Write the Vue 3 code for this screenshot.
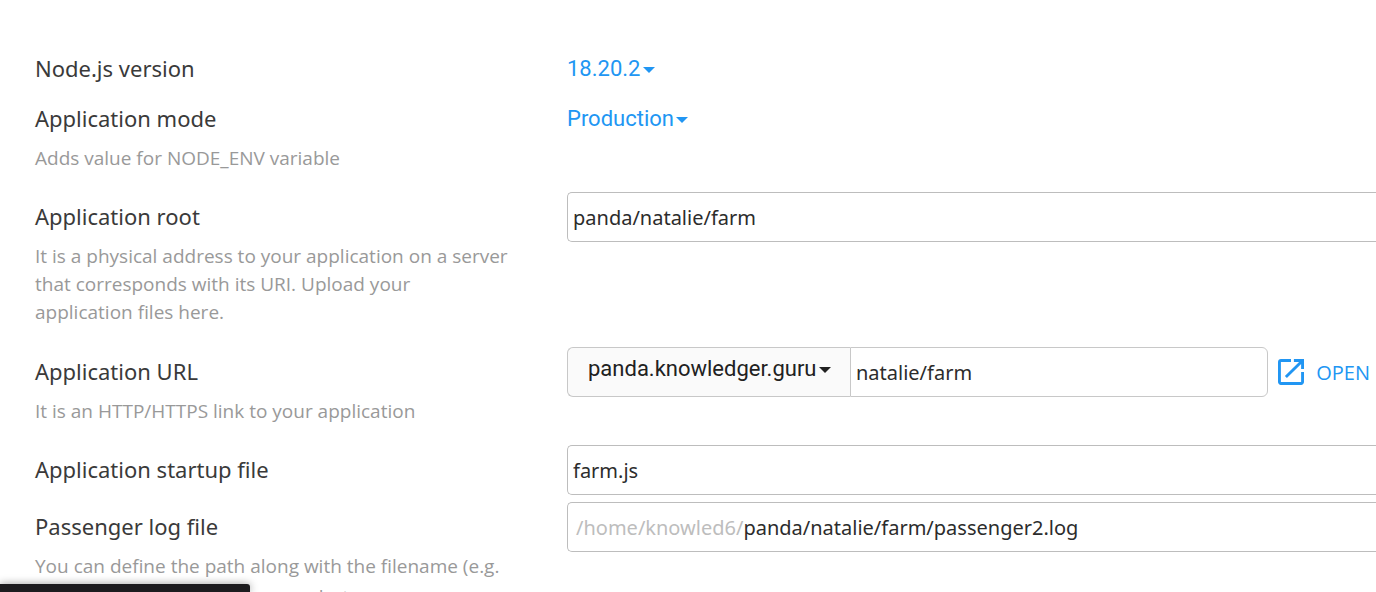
<script setup>
import { ref } from 'vue'

const version = ref('18.20.2')
const mode = ref('Production')
const root = ref('panda/natalie/farm')
const domain = ref('panda.knowledger.guru')
const uri = ref('natalie/farm')
const startup = ref('farm.js')
const logFile = ref('panda/natalie/farm/passenger2.log')
</script>

<template>
  <main class="page">
    <form class="form" @submit.prevent>
      <div class="row">
        <div class="info"><label class="title" for="version">Node.js version</label></div>
        <div class="field">
          <span class="picker">
            <select id="version" v-model="version"><option>18.20.2</option></select>
            <svg class="caret" viewBox="0 0 12 6" aria-hidden="true"><path d="M0 0h12L6 6z" /></svg>
          </span>
        </div>
      </div>

      <div class="row described">
        <div class="info">
          <label class="title" for="mode">Application mode</label>
          <p class="hint">Adds value for NODE_ENV variable</p>
        </div>
        <div class="field">
          <span class="picker">
            <select id="mode" v-model="mode"><option>Production</option></select>
            <svg class="caret" viewBox="0 0 12 6" aria-hidden="true"><path d="M0 0h12L6 6z" /></svg>
          </span>
        </div>
      </div>

      <div class="row described-long">
        <div class="info">
          <label class="title" for="root">Application root</label>
          <p class="hint">It is a physical address to your application on a server that corresponds with its URI. Upload your application files here.</p>
        </div>
        <div class="field">
          <input id="root" v-model="root" class="box wide" type="text" />
        </div>
      </div>

      <div class="row described">
        <div class="info">
          <label class="title" for="uri">Application URL</label>
          <p class="hint">It is an HTTP/HTTPS link to your application</p>
        </div>
        <div class="field url">
          <span class="picker domain">
            <select v-model="domain" aria-label="Domain"><option>panda.knowledger.guru</option></select>
            <svg class="caret" viewBox="0 0 12 6" aria-hidden="true"><path d="M0 0h12L6 6z" /></svg>
          </span>
          <input id="uri" v-model="uri" class="box uri" type="text" />
          <a class="open" href="#">
            <svg class="open-icon" viewBox="3 3 18 18" aria-hidden="true"><path d="M19 19H5V5h7V3H5c-1.11 0-2 .9-2 2v14c0 1.1.89 2 2 2h14c1.1 0 2-.9 2-2v-7h-2v7zM14 3v2h3.59l-9.83 9.83 1.41 1.41L19 6.41V10h2V3h-7z" /></svg>
            <span>OPEN</span>
          </a>
        </div>
      </div>

      <div class="row compact">
        <div class="info"><label class="title" for="startup">Application startup file</label></div>
        <div class="field">
          <input id="startup" v-model="startup" class="box wide" type="text" />
        </div>
      </div>

      <div class="row">
        <div class="info">
          <label class="title" for="log">Passenger log file</label>
          <p class="hint">You can define the path along with the filename (e.g.</p>
          <p class="hint more">/home/me/x.log) or use a name but</p>
        </div>
        <div class="field">
          <div class="box wide prefixed">
            <span class="prefix">/home/knowled6/</span>
            <input id="log" v-model="logFile" type="text" />
          </div>
        </div>
      </div>
    </form>
    <div class="status"></div>
  </main>
</template>

<style>
body {
  background: #fff;
}
</style>

<style scoped>
.page {
  height: 100vh;
  overflow: hidden;
  font-family: "Noto Sans", sans-serif;
  color: #3a3a3a;
}
.form {
  padding: 44px 0 0 35px;
}
.row {
  display: grid;
  grid-template-columns: 476px minmax(0, 1fr);
  column-gap: 56px;
}
.described {
  padding-bottom: 20px;
}
.described-long {
  padding-bottom: 21px;
}
.compact {
  padding-bottom: 7px;
}
.title {
  display: block;
  margin-bottom: 2px;
  font-size: 22px;
  line-height: 48px;
}
.hint {
  margin: 0;
  font-family: "Open Sans", sans-serif;
  font-size: 19px;
  line-height: 28px;
  color: #999;
}
.more {
  margin-top: 3px;
}
.field {
  display: flex;
  height: 50px;
}
.picker {
  display: inline-flex;
  align-items: center;
  gap: 2px;
  color: #2196f3;
}
.picker select {
  appearance: none;
  margin: 0;
  padding: 0;
  border: 0;
  background: transparent;
  color: inherit;
  font-family: Roboto, sans-serif;
  font-size: 22px;
  line-height: 26px;
}
.caret {
  width: 12px;
  height: 6px;
  margin-top: 2px;
  fill: currentColor;
  pointer-events: none;
}
.box {
  box-sizing: border-box;
  height: 50px;
  min-width: 0;
  padding: 0 5px;
  border: 1px solid #bdbdbd;
  border-radius: 5px;
  background: #fff;
  color: #2c2c2c;
  font-family: "Noto Sans", sans-serif;
  font-size: 20px;
}
.wide {
  width: 100%;
  border-right: 0;
  border-radius: 5px 0 0 5px;
}
.url {
  padding-right: 6px;
}
.domain {
  box-sizing: border-box;
  padding: 0 19px 6px 20px;
  border: 1px solid #c8c8c8;
  border-right: 0;
  border-radius: 6px 0 0 6px;
  background: #fafafa;
  color: #212121;
}
.uri {
  flex: 1;
  border-color: #c8c8c8;
  border-radius: 0 6px 6px 0;
}
.open {
  display: flex;
  align-items: center;
  gap: 12px;
  margin-left: 10px;
  color: #2196f3;
  font-family: "Open Sans", sans-serif;
  font-size: 20px;
  text-decoration: none;
}
.open-icon {
  width: 26px;
  height: 26px;
  fill: currentColor;
}
.prefixed {
  display: flex;
  align-items: center;
  padding-left: 8px;
}
.prefix {
  color: #bdbdbd;
}
.prefixed input {
  flex: 1;
  min-width: 0;
  padding: 0;
  border: 0;
  background: transparent;
  color: inherit;
  font: inherit;
}
.status {
  position: fixed;
  left: 0;
  bottom: 0;
  width: 250px;
  height: 8px;
  border-radius: 0 3px 0 0;
  background: #1c1b1e;
  box-shadow: 0 0 8px rgba(0, 0, 0, 0.4);
}
</style>
